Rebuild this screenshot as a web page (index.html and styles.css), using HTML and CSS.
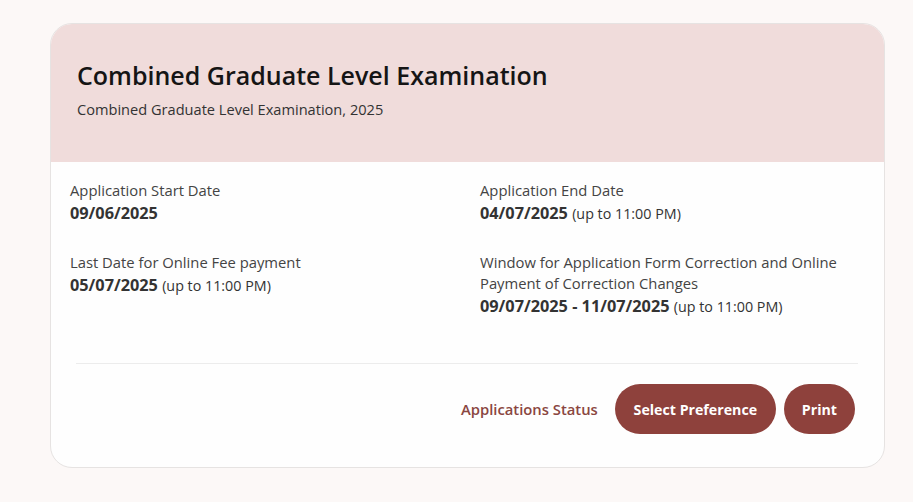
FILE: index.html
```html
<!DOCTYPE html>
<html lang="en">
<head>
<meta charset="utf-8">
<title>Combined Graduate Level Examination</title>
<link rel="stylesheet" href="styles.css">
</head>
<body>
<main class="page">
  <section class="card">
    <header class="card-head">
      <h1 class="title">Combined Graduate Level Examination</h1>
      <p class="subtitle">Combined Graduate Level Examination, 2025</p>
    </header>
    <div class="card-body">
      <div class="dates">
        <div class="item">
          <div class="label">Application Start Date</div>
          <div class="value">09/06/2025</div>
        </div>
        <div class="item">
          <div class="label">Application End Date</div>
          <div class="value">04/07/2025 <span class="note">(up to 11:00 PM)</span></div>
        </div>
        <div class="item">
          <div class="label">Last Date for Online Fee payment</div>
          <div class="value">05/07/2025 <span class="note">(up to 11:00 PM)</span></div>
        </div>
        <div class="item">
          <div class="label">Window for Application Form Correction and Online Payment of Correction Changes</div>
          <div class="value">09/07/2025 - 11/07/2025 <span class="note">(up to 11:00 PM)</span></div>
        </div>
      </div>
      <hr class="divider">
      <div class="actions">
        <a class="link" href="#">Applications Status</a>
        <button class="btn btn-wide" type="button">Select Preference</button>
        <button class="btn" type="button">Print</button>
      </div>
    </div>
  </section>
</main>
</body>
</html>
```

FILE: styles.css
```css
* { box-sizing: border-box; }

html, body {
  margin: 0;
  padding: 0;
}

body {
  background: #fcf8f7;
  font-family: "Open Sans", "Lato", "Liberation Sans", sans-serif;
  color: #333;
  width: 913px;
  height: 502px;
  overflow: hidden;
}

.page {
  padding: 23px 0 0 50px;
}

.card {
  width: 835px;
  height: 445px;
  background: #fefefe;
  border: 1px solid #e6e3e2;
  border-radius: 22px;
  overflow: hidden;
  display: flex;
  flex-direction: column;
}

.card-head {
  background: #f0dcdb;
  height: 138px;
  padding: 36px 26px 0;
}

.title {
  margin: 0;
  font-size: 25px;
  line-height: 30px;
  font-weight: 600;
  color: #151515;
}

.subtitle {
  margin: 9px 0 0;
  font-size: 14.6px;
  line-height: 20px;
  color: #333;
}

.card-body {
  flex: 1;
  padding: 18px 26px 0 19px;
  display: flex;
  flex-direction: column;
}

.dates {
  display: grid;
  grid-template-columns: 410px 1fr;
  row-gap: 26px;
}

.label {
  font-size: 14.8px;
  line-height: 21px;
  color: #444;
}

.value {
  font-size: 16.3px;
  line-height: 25px;
  font-weight: 700;
  color: #333;
}

.note {
  font-size: 14.3px;
  font-weight: 400;
}

.divider {
  border: 0;
  border-top: 1px solid #ececec;
  margin: 44px 0 0 6px;
}

.actions {
  display: flex;
  align-items: center;
  justify-content: flex-end;
  gap: 8px;
  margin-top: 20px;
  padding-right: 3px;
}

.link {
  color: #8a4641;
  text-decoration: none;
  font-size: 14.8px;
  font-weight: 600;
  margin-right: 9px;
}

.btn {
  height: 50px;
  padding: 0 18px;
  border: 0;
  border-radius: 25px;
  background: #8e413c;
  color: #fff;
  font-family: inherit;
  font-size: 14.2px;
  font-weight: 700;
}

.btn-wide {
  width: 161px;
  padding: 0;
}
```
